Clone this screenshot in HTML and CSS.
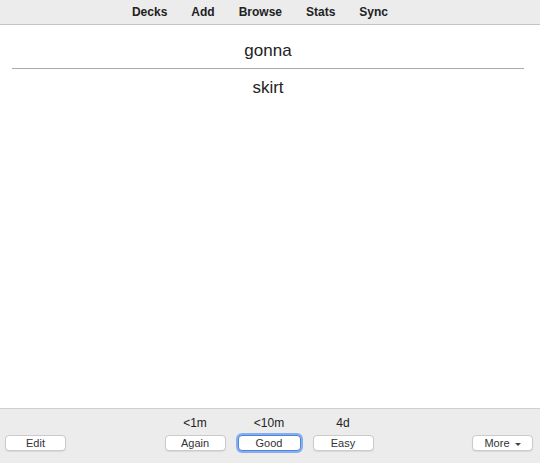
FILE: index.html
```html
<!DOCTYPE html>
<html lang="en">
<head>
  <meta charset="UTF-8">
  <title>Study</title>
  <link rel="stylesheet" href="styles.css">
</head>
<body>
  <!-- Top toolbar -->
  <div class="toolbar">
    <a class="nav-link">Decks</a>
    <a class="nav-link">Add</a>
    <a class="nav-link">Browse</a>
    <a class="nav-link">Stats</a>
    <a class="nav-link">Sync</a>
  </div>

  <!-- Card -->
  <div class="card">
    <div class="side">gonna</div>
    <hr class="answer-line">
    <div class="side">skirt</div>
  </div>

  <!-- Bottom bar -->
  <div class="bottom-bar">
    <div class="left">
      <button class="btn">Edit</button>
    </div>
    <div class="answers">
      <div class="answer">
        <span class="ivl">&lt;1m</span>
        <button class="btn">Again</button>
      </div>
      <div class="answer">
        <span class="ivl">&lt;10m</span>
        <button class="btn focused">Good</button>
      </div>
      <div class="answer">
        <span class="ivl">4d</span>
        <button class="btn">Easy</button>
      </div>
    </div>
    <div class="right">
      <button class="btn">More <span class="caret"></span></button>
    </div>
  </div>
</body>
</html>
```

FILE: styles.css
```css
html, body {
  height: 100%;
}

body {
  margin: 0;
  font-family: 'Liberation Sans', Arial, sans-serif;
  color: #222;
  background-color: #fff;
  display: flex;
  flex-direction: column;
}

/* Top toolbar */
.toolbar {
  height: 24px;
  background-color: #ececec;
  border-bottom: 1px solid #c4c4c4;
  display: flex;
  justify-content: center;
  align-items: center;
  gap: 24px;
  padding-right: 20px;
}

.nav-link {
  font-size: 12px;
  font-weight: bold;
  color: #222;
  cursor: pointer;
}

/* Card content */
.card {
  flex: 1;
  padding: 16px 16px 0 12px;
  text-align: center;
  font-size: 17px;
}

.side {
  line-height: 20px;
}

.answer-line {
  margin: 7px 0 9px;
  border: none;
  border-top: 1px solid #a8a8a8;
}

/* Bottom bar */
.bottom-bar {
  height: 55px;
  box-sizing: border-box;
  background-color: #ececec;
  border-top: 1px solid #cfcfcf;
  display: grid;
  grid-template-columns: 1fr auto 1fr;
  align-items: end;
  padding: 6px 7px 12px 5px;
}

.right {
  text-align: right;
}

.answers {
  display: flex;
  gap: 12px;
}

.answer {
  display: flex;
  flex-direction: column;
  align-items: center;
  gap: 4px;
}

.ivl {
  font-size: 12px;
  line-height: 15px;
}

.btn {
  font-family: 'Liberation Sans', Arial, sans-serif;
  font-size: 11px;
  width: 61px;
  height: 16px;
  padding: 0;
  background-color: #fff;
  color: #333;
  border: 1px solid #cacaca;
  border-radius: 4px;
  box-shadow: 0 1px 1px rgba(0, 0, 0, 0.08);
}

.btn.focused {
  width: 63px;
  border: 1px solid #4f84dc;
  box-shadow: 0 0 0 2px #86aeee;
}

.caret {
  display: inline-block;
  width: 0;
  height: 0;
  border-left: 3px solid transparent;
  border-right: 3px solid transparent;
  border-top: 3px solid #444;
  vertical-align: middle;
  margin-left: 2px;
}
```
